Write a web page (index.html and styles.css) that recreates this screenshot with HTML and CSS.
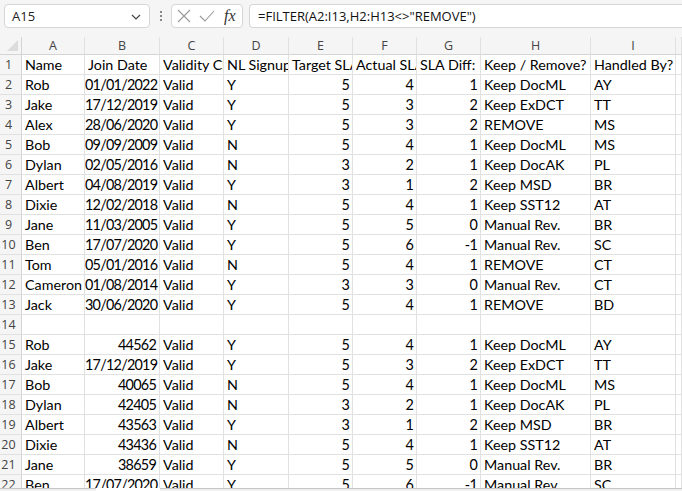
FILE: index.html
```html
<!DOCTYPE html>
<html>
<head>
<meta charset="utf-8">
<link rel="stylesheet" href="styles.css">
</head>
<body>
<div class="app">
  <div class="fbar">
    <div class="namebox"><span class="nb-text">A15</span>
      <svg class="chev" width="10" height="6" viewBox="0 0 10 6"><path d="M1 1 L5 5 L9 1" fill="none" stroke="#444" stroke-width="1.2"/></svg>
    </div>
    <div class="dots"><i></i><i></i><i></i></div>
    <div class="fxbox">
      <svg width="14" height="14" viewBox="0 0 14 14"><path d="M1 1 L13 13 M13 1 L1 13" stroke="#9a9a9a" stroke-width="1.1" fill="none"/></svg>
      <svg width="16" height="14" viewBox="0 0 16 14"><path d="M1 7 L6 12 L15 2" stroke="#9a9a9a" stroke-width="1.1" fill="none"/></svg>
      <span class="fx">fx</span>
    </div>
    <div class="formula">=FILTER(A2:I13,H2:H13&lt;&gt;"REMOVE")</div>
  </div>
  <div class="sheet" id="sheet"></div>
  <div class="footer"><div class="f1"></div><div class="f2"></div><div class="f3"></div></div>
</div>
<script src="app.js"></script>
</body>
</html>
```
FILE: styles.css
```css
* { box-sizing: border-box; }
html, body { margin: 0; padding: 0; }
body { width: 682px; height: 491px; overflow: hidden; background: #fff; }
.app { display: flex; flex-direction: column; height: 491px; }
.fbar { height: 37px; background: #f5f5f5; display: flex; align-items: flex-start; padding-top: 4px; padding-left: 4px; }
.namebox { width: 146px; height: 24px; background: #fff; border: 1px solid #d6d6d6; border-radius: 4px; display: flex; align-items: center; justify-content: space-between; padding: 0 8px 0 7px; font-family: "Open Sans", sans-serif; font-size: 13px; color: #222; }
.chev { margin-top: 1px; }
.dots { width: 21px; height: 24px; display: flex; flex-direction: column; align-items: center; justify-content: center; gap: 2px; }
.dots i { display: block; width: 2px; height: 2px; background: #888; }
.fxbox { width: 72px; height: 24px; background: #fff; border: 1px solid #d6d6d6; border-radius: 4px; display: flex; align-items: center; gap: 8px; padding-left: 5px; }
.fx { font-family: "Liberation Serif", serif; font-style: italic; font-size: 16px; color: #333; margin-left: 1px; }
.formula { flex: 1; margin-left: 6px; height: 24px; background: #fff; border: 1px solid #d6d6d6; border-right: none; border-radius: 4px 0 0 4px; font-family: "Open Sans", sans-serif; font-size: 13px; color: #111; display: flex; align-items: center; padding-left: 8px; white-space: nowrap; }
.sheet { height: 451px; overflow: hidden; display: grid; grid-template-columns: 22px 63px 75px 64px 65px 64px 64px 64px 110px 85px 1fr; grid-auto-rows: 20px; grid-template-rows: 18px; }
.c { border-right: 1px solid #e1e1e1; border-bottom: 1px solid #e1e1e1; font-family: Lato, sans-serif; font-size: 14.3px; color: #000; padding: 0 0 0 3px; white-space: nowrap; overflow: hidden; line-height: 19px; }
.c.r { text-align: right; padding: 0 3px 0 0; letter-spacing: -0.75px; font-size: 14.4px; }
.h { background: #f5f5f5; font-family: "Open Sans", sans-serif; font-size: 12.5px; color: #444; text-align: center; line-height: 18px; border-right: 1px solid #e1e1e1; border-bottom: 1px solid #d4d4d4; }
.rh { background: #f5f5f5; font-family: "Open Sans", sans-serif; font-size: 12.5px; color: #444; text-align: center; padding-right: 4px; line-height: 20px; border-right: 1px solid #d4d4d4; border-bottom: 1px solid #e1e1e1; }
.corner { background: #f5f5f5; border-right: 1px solid #d4d4d4; border-bottom: 1px solid #d4d4d4; position: relative; }
.corner::after { content: ""; position: absolute; right: 3px; bottom: 3px; width: 0; height: 0; border-left: 11px solid transparent; border-bottom: 11px solid #dcdcdc; }
.footer { height: 3px; display: flex; background: #f0f0f0; }
.f1 { width: 96px; border-top: 1px solid #c6c6c6; }
.f2 { width: 64px; background: #fff; }
.f3 { flex: 1; border-top: 1px solid #c6c6c6; }
```
FILE: app.js
```js
var data = [
["Name","Join Date","Validity Check","NL Signup","Target SLA","Actual SLA","SLA Diff:","Keep / Remove?","Handled By?"],
["Rob","01/01/2022","Valid","Y","5","4","1","Keep DocML","AY"],
["Jake","17/12/2019","Valid","Y","5","3","2","Keep ExDCT","TT"],
["Alex","28/06/2020","Valid","Y","5","3","2","REMOVE","MS"],
["Bob","09/09/2009","Valid","N","5","4","1","Keep DocML","MS"],
["Dylan","02/05/2016","Valid","N","3","2","1","Keep DocAK","PL"],
["Albert","04/08/2019","Valid","Y","3","1","2","Keep MSD","BR"],
["Dixie","12/02/2018","Valid","N","5","4","1","Keep SST12","AT"],
["Jane","11/03/2005","Valid","Y","5","5","0","Manual Rev.","BR"],
["Ben","17/07/2020","Valid","Y","5","6","-1","Manual Rev.","SC"],
["Tom","05/01/2016","Valid","N","5","4","1","REMOVE","CT"],
["Cameron","01/08/2014","Valid","Y","3","3","0","Manual Rev.","CT"],
["Jack","30/06/2020","Valid","Y","5","4","1","REMOVE","BD"],
["","","","","","","","",""],
["Rob","44562","Valid","Y","5","4","1","Keep DocML","AY"],
["Jake","17/12/2019","Valid","Y","5","3","2","Keep ExDCT","TT"],
["Bob","40065","Valid","N","5","4","1","Keep DocML","MS"],
["Dylan","42405","Valid","N","3","2","1","Keep DocAK","PL"],
["Albert","43563","Valid","Y","3","1","2","Keep MSD","BR"],
["Dixie","43436","Valid","N","5","4","1","Keep SST12","AT"],
["Jane","38659","Valid","Y","5","5","0","Manual Rev.","BR"],
["Ben","17/07/2020","Valid","Y","5","6","-1","Manual Rev.","SC"]
];
var sheet = document.getElementById("sheet");
function add(cls, txt) { var d = document.createElement("div"); d.className = cls; d.textContent = txt; sheet.appendChild(d); }
add("corner", "");
"ABCDEFGHIJ".split("").forEach(function (l) { add("h", l === "J" ? "" : l); });
data.forEach(function (row, i) {
  add("rh", String(i + 1));
  row.forEach(function (v, j) {
    var right = i > 0 && (j === 1 || (j >= 4 && j <= 6));
    add("c" + (right ? " r" : ""), v);
  });
  add("c", "");
});
```
